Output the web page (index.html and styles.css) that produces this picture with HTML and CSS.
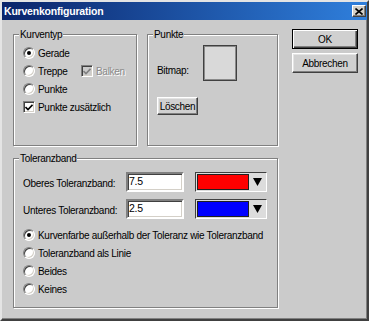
FILE: index.html
```html
<!DOCTYPE html>
<html lang="de">
<head>
<meta charset="UTF-8" />
<title>Kurvenkonfiguration</title>
<link rel="stylesheet" href="styles.css">
</head>
<body>

<div class="window">
  <div class="titlebar">
    <span class="title">Kurvenkonfiguration</span>
    <span class="close">
      <svg width="8" height="7" viewBox="0 0 8 7"><path d="M0.5 0.5 L7.5 6.5 M7.5 0.5 L0.5 6.5" stroke="#000" stroke-width="1.6" /></svg>
    </span>
  </div>

  <div class="content">
    <div class="main">
      <div class="top-row">
        <!-- Kurventyp -->
        <div class="group kurventyp">
          <div class="group-title">Kurventyp</div>
          <div class="options">
            <div class="option"><span class="radio checked"></span>Gerade</div>
            <div class="option">
              <span class="radio"></span><span class="treppe">Treppe</span>
              <span class="check disabled"><svg width="8" height="7" viewBox="0 0 8 7"><path d="M0.5 3 L3 5.5 L7.5 0.8" fill="none" stroke="#808080" stroke-width="1.6" /></svg></span>
              <span class="disabled-text">Balken</span>
            </div>
            <div class="option"><span class="radio"></span>Punkte</div>
            <div class="option">
              <span class="check"><svg width="8" height="7" viewBox="0 0 8 7"><path d="M0.5 3 L3 5.5 L7.5 0.8" fill="none" stroke="#000" stroke-width="1.6" /></svg></span>
              Punkte zusätzlich
            </div>
          </div>
        </div>

        <!-- Punkte -->
        <div class="group punkte">
          <div class="group-title">Punkte</div>
          <div class="bitmap-row">
            <span class="bitmap-label">Bitmap:</span>
            <span class="bitmap"></span>
          </div>
          <button class="btn loeschen">Löschen</button>
        </div>
      </div>

      <!-- Toleranzband -->
      <div class="group toleranz">
        <div class="group-title">Toleranzband</div>
        <div class="field-row first">
          <span class="field-label">Oberes Toleranzband:</span>
          <span class="field">7.5</span>
          <span class="color"><span class="swatch red"></span><span class="arrow"><svg width="9" height="8" viewBox="0 0 9 8"><path d="M0 0 H9 L4.5 8 Z" fill="#000" /></svg></span></span>
        </div>
        <div class="field-row">
          <span class="field-label">Unteres Toleranzband:</span>
          <span class="field">2.5</span>
          <span class="color"><span class="swatch blue"></span><span class="arrow"><svg width="9" height="8" viewBox="0 0 9 8"><path d="M0 0 H9 L4.5 8 Z" fill="#000" /></svg></span></span>
        </div>
        <div class="options band-options">
          <div class="option"><span class="radio checked"></span>Kurvenfarbe außerhalb der Toleranz wie Toleranzband</div>
          <div class="option"><span class="radio"></span>Toleranzband als Linie</div>
          <div class="option"><span class="radio"></span>Beides</div>
          <div class="option"><span class="radio"></span>Keines</div>
        </div>
      </div>
    </div>

    <div class="buttons">
      <button class="btn default">OK</button>
      <button class="btn">Abbrechen</button>
    </div>
  </div>
</div>

</body>
</html>
```

FILE: styles.css
```css
* {
  box-sizing: border-box;
}
body {
  margin: 0;
  background: #cbcbcb;
  font-family: "Liberation Sans", Arial, sans-serif;
  font-size: 10px;
  letter-spacing: -0.3px;
  color: #000;
}
.window {
  width: 369px;
  height: 321px;
  background: #cbcbcb;
  border: 2px solid;
  border-color: #e4e4e4 #404040 #404040 #e4e4e4;
  box-shadow: inset -1px -1px 0 #808080;
}
.titlebar {
  height: 18px;
  display: flex;
  align-items: center;
  justify-content: space-between;
  padding: 0 1px 0 2px;
  background: linear-gradient(90deg, #0a246a, #2f7fdc);
}
.title {
  color: #fff;
  font-weight: bold;
  font-size: 10.5px;
  letter-spacing: -0.2px;
}
.close {
  width: 14px;
  height: 12px;
  display: flex;
  align-items: center;
  justify-content: center;
  background: #d4d0c8;
  border: 1px solid;
  border-color: #fff #404040 #404040 #fff;
  box-shadow: inset -1px -1px 0 #808080;
}
.content {
  display: flex;
  padding: 9px 0 0 11px;
}
.main {
  width: 265px;
  margin-top: 5px;
}
.top-row {
  display: flex;
  gap: 10px;
}
.group {
  border: 1px solid #808080;
  box-shadow: inset 1px 1px 0 #fff, 1px 1px 0 #fff;
  padding: 0 0 0 9px;
}
.group-title {
  width: fit-content;
  margin: -7px 0 0 -4px;
  padding: 0 1px;
  line-height: 13px;
  background: #cbcbcb;
}
.kurventyp {
  width: 124px;
  height: 112px;
}
.punkte {
  width: 131px;
  height: 112px;
}
.options {
  padding-top: 3px;
}
.option {
  display: flex;
  align-items: center;
  height: 18px;
  white-space: nowrap;
}
.radio {
  width: 12px;
  height: 12px;
  margin-right: 3px;
  border-radius: 50%;
  background: #fff;
  border: 1px solid;
  border-color: #808080 #fff #fff #808080;
  box-shadow: inset 1px 1px 0 #404040, inset -1px -1px 0 #d4d0c8;
  display: flex;
  align-items: center;
  justify-content: center;
  flex-shrink: 0;
}
.radio.checked::after {
  content: "";
  width: 4px;
  height: 4px;
  border-radius: 50%;
  background: #000;
}
.check {
  width: 12px;
  height: 12px;
  margin-right: 3px;
  background: #fff;
  border: 1px solid;
  border-color: #808080 #fff #fff #808080;
  box-shadow: inset 1px 1px 0 #404040, inset -1px -1px 0 #d4d0c8;
  display: flex;
  align-items: center;
  justify-content: center;
  flex-shrink: 0;
}
.check.disabled {
  background: #cbcbcb;
}
.treppe {
  width: 43px;
}
.disabled-text {
  color: #8a8a8a;
  text-shadow: 1px 1px 0 #fff;
}
.bitmap-row {
  display: flex;
  align-items: center;
  margin-top: 4px;
}
.bitmap-label {
  width: 46px;
  margin-top: 14px;
}
.bitmap {
  width: 34px;
  height: 36px;
  background: #d9d9d9;
  border: 1px solid #404040;
  box-shadow: inset 0 0 0 1px #8a8a8a;
}
.btn {
  font: inherit;
  letter-spacing: inherit;
  color: #000;
  background: #d0d0d0;
  border: 1px solid;
  border-color: #fff #404040 #404040 #fff;
  box-shadow: inset -1px -1px 0 #808080, inset 1px 1px 0 #e4e4e4;
  padding: 0;
}
.loeschen {
  display: block;
  width: 41px;
  height: 18px;
  margin-top: 16px;
  overflow: hidden;
}
.toleranz {
  margin-top: 12px;
  height: 150px;
}
.field-row {
  display: flex;
  height: 20px;
  margin-top: 7px;
}
.field-label {
  width: 103px;
  padding-top: 6px;
}
.field {
  width: 58px;
  height: 20px;
  padding: 1px 0 0 1px;
  line-height: 13px;
  background: #fff;
  border: 2px solid;
  border-color: #808080 #fff #fff #808080;
  box-shadow: inset 1px 1px 0 #404040, inset -1px -1px 0 #d4d0c8;
  font-size: 10.5px;
}
.color {
  display: flex;
  width: 72px;
  height: 20px;
  margin-left: 11px;
  padding: 1px;
  background: #dcdcdc;
  border: 1px solid;
  border-color: #404040 #fff #fff #404040;
}
.swatch {
  flex: 1;
  border: 1px solid #202020;
}
.swatch.red {
  background: #ff0000;
}
.swatch.blue {
  background: #0000ff;
}
.arrow {
  width: 16px;
  display: flex;
  align-items: center;
  justify-content: center;
}
.band-options {
  padding-top: 7px;
}
.buttons {
  display: flex;
  flex-direction: column;
  gap: 4px;
  margin-left: 14px;
}
.buttons .btn {
  width: 66px;
  height: 20px;
}
.btn.default {
  border: 1px solid #000;
  box-shadow: inset 1px 1px 0 #fff, inset -1px -1px 0 #404040, inset -2px -2px 0 #808080;
}
```
